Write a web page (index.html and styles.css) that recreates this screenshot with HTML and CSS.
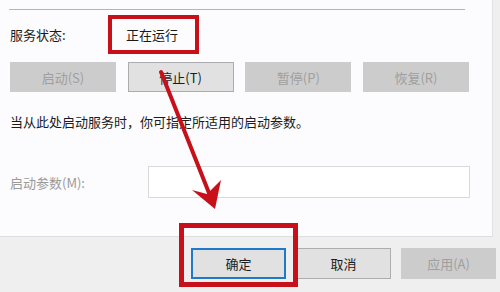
FILE: index.html
```html
<!DOCTYPE html>
<html lang="zh-CN">
<head>
<meta charset="utf-8">
<title>服务属性</title>
<link rel="stylesheet" href="styles.css">
</head>
<body>
<div class="window">
  <div class="panel">
    <div class="sep"></div>
    <div class="status-row">
      <span class="label">服务状态:</span>
      <span class="value">正在运行</span>
    </div>
    <div class="btn-row">
      <button class="btn disabled">启动(S)</button>
      <button class="btn">停止(T)</button>
      <button class="btn disabled">暂停(P)</button>
      <button class="btn disabled">恢复(R)</button>
    </div>
    <p class="hint">当从此处启动服务时，你可指定所适用的启动参数。</p>
    <div class="param-row">
      <span class="param-label">启动参数(M):</span>
      <div class="input"></div>
    </div>
  </div>
  <div class="footer">
    <button class="fbtn default">确定</button>
    <button class="fbtn">取消</button>
    <button class="fbtn disabled">应用(A)</button>
  </div>

  <div class="mark mark-status"></div>
  <div class="mark mark-ok"></div>
  <svg class="arrow" width="500" height="292" viewBox="0 0 500 292">
    <line x1="161" y1="72" x2="209" y2="193" stroke="#c8101b" stroke-width="4" stroke-linecap="round"/>
    <polygon points="215,209 192,190 207,194 221,180" fill="#c8101b"/>
  </svg>
</div>
</body>
</html>
```

FILE: styles.css
```css
* { box-sizing: border-box; }
html, body {
  margin: 0;
  padding: 0;
}
body {
  width: 500px;
  height: 292px;
  overflow: hidden;
  background: #efeff0;
  font-family: "Noto Sans CJK SC", "Microsoft YaHei", sans-serif;
  font-size: 13px;
  color: #1b1b1b;
}
.window {
  position: relative;
  width: 500px;
  height: 292px;
}
.panel {
  width: 493px;
  height: 237px;
  background: #fcfbfd;
  border-right: 1px solid #e2e2e4;
  border-bottom: 1px solid #dedede;
  padding: 9px 0 0 10px;
}
.sep {
  width: 456px;
  height: 1px;
  margin-left: -1px;
  background: #b5b5b5;
}
.status-row {
  display: flex;
  align-items: center;
  height: 20px;
  margin-top: 15px;
  line-height: 20px;
}
.label {
  width: 116px;
}
.btn-row {
  display: flex;
  justify-content: space-between;
  width: 459px;
  margin-top: 17px;
}
.btn {
  width: 106px;
  height: 30px;
  font: inherit;
  color: #1b1b1b;
  background: #e1e1e1;
  border: 1px solid #adadad;
  padding: 0;
}
.btn.disabled {
  background: #cccccc;
  border-color: #cccccc;
  color: #9f9f9f;
}
.hint {
  margin: 20px 0 0;
  line-height: 20px;
}
.param-row {
  display: flex;
  align-items: center;
  margin-top: 34px;
}
.param-label {
  width: 138px;
  color: #9a9a9a;
}
.input {
  width: 322px;
  height: 32px;
  background: #ffffff;
  border: 1px solid #d9d9d9;
}
.footer {
  display: flex;
  justify-content: flex-end;
  gap: 10px;
  padding: 11px 4px 0 0;
}
.fbtn {
  width: 95px;
  height: 31px;
  font: inherit;
  color: #1b1b1b;
  background: #e1e1e1;
  border: 1px solid #adadad;
  padding: 0;
}
.fbtn.default {
  border: 2px solid #1f78c8;
}
.fbtn.disabled {
  background: #cccccc;
  border-color: #cccccc;
  color: #9f9f9f;
}
.mark {
  position: absolute;
  border: 4px solid #c8101b;
}
.mark-status {
  left: 108px;
  top: 15px;
  width: 91px;
  height: 39px;
}
.mark-ok {
  left: 179px;
  top: 223px;
  width: 119px;
  height: 64px;
  border-width: 5px;
}
.arrow {
  position: absolute;
  left: 0;
  top: 0;
}
```
